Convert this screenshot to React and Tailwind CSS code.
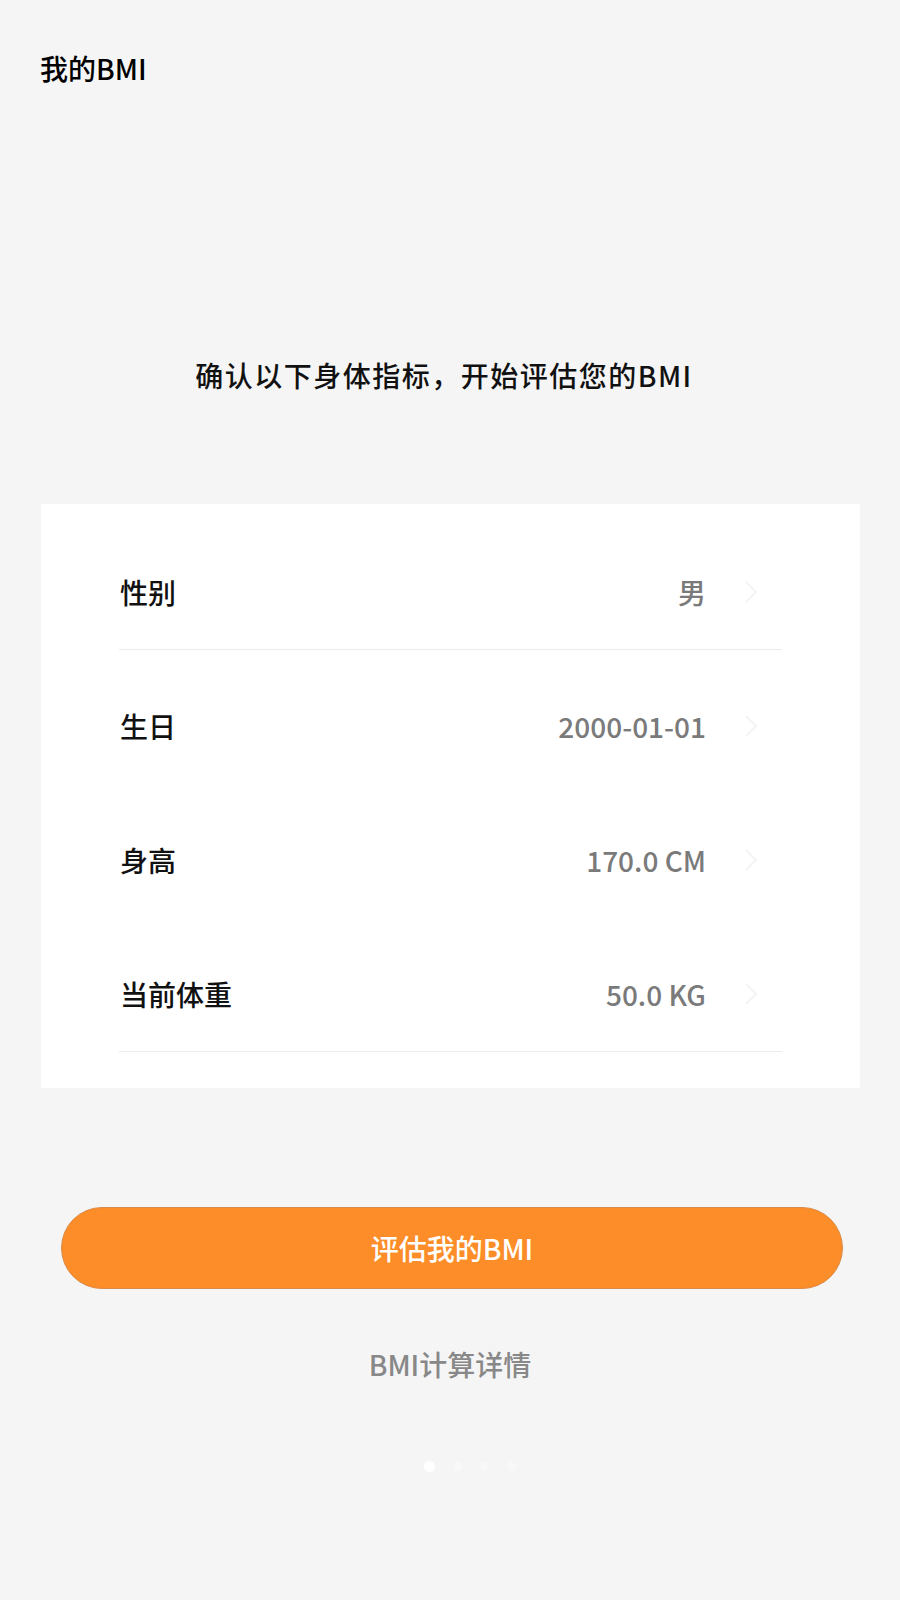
import React from "react";

const rows = [
  { label: "性别", value: "男", line: true },
  { label: "生日", value: "2000-01-01", line: false },
  { label: "身高", value: "170.0 CM", line: false },
  { label: "当前体重", value: "50.0 KG", line: true },
];

function Chevron() {
  return (
    <svg width="14" height="24" viewBox="0 0 14 24" className="ml-[38px] mr-[24px]">
      <path d="M2 2 L12 12 L2 22" fill="none" stroke="#f4f4f4" strokeWidth="2" />
    </svg>
  );
}

function App() {
  return (
    <div className="min-h-[1600px] bg-[#f5f5f5] font-['Noto_Sans_CJK_SC','Noto_Sans',sans-serif] flex flex-col">
      <div className="pt-[48px] pl-[40px] text-[28px] leading-[40px] font-medium text-black">
        我的BMI
      </div>

      <div className="mt-[267px] pr-[12px] text-center text-[28px] leading-[40px] font-medium tracking-[1.5px] text-[#111]">
        确认以下身体指标，开始评估您的BMI
      </div>

      <div className="mt-[109px] ml-[41px] mr-[40px] bg-white px-[78px] pt-[12px] pb-[36px]">
        {rows.map((r) => (
          <div
            key={r.label}
            className={
              "h-[134px] pt-[18px] flex items-center justify-between border-b " +
              (r.line ? "border-[#ececec]" : "border-white")
            }
          >
            <span className="pl-[1px] text-[28px] font-medium text-[#111]">{r.label}</span>
            <div className="flex items-center">
              <span className="text-[28px] font-medium text-[#7a7a7a]">{r.value}</span>
              <Chevron />
            </div>
          </div>
        ))}
      </div>

      <button className="mt-[119px] ml-[61px] mr-[57px] h-[82px] rounded-full bg-[#fd8d28] border border-[#d98a4a] text-white text-[28px] font-medium">
        评估我的BMI
      </button>

      <div className="mt-[55px] text-center text-[28px] leading-[40px] font-medium text-[#888]">
        BMI计算详情
      </div>

      <div className="mt-[77px] flex items-center justify-center gap-[18px] pl-[40px]">
        <span className="w-[11px] h-[11px] rounded-full bg-white" />
        <span className="w-[9px] h-[9px] rounded-full bg-[#f8f8f8]" />
        <span className="w-[9px] h-[9px] rounded-full bg-[#f8f8f8]" />
        <span className="w-[9px] h-[9px] rounded-full bg-[#f8f8f8]" />
      </div>
    </div>
  );
}

export default App;
